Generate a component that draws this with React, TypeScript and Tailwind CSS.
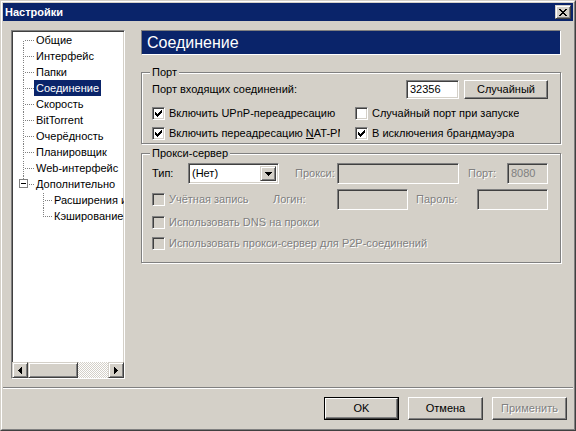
import type { ReactNode } from "react";

const sunken =
  "border border-t-[#808080] border-l-[#808080] border-b-white border-r-white shadow-[inset_1px_1px_#404040,inset_-1px_-1px_#d4d0c8]";
const raised =
  "border border-t-white border-l-white border-b-[#404040] border-r-[#404040] shadow-[inset_-1px_-1px_#808080]";
const raisedScroll =
  "border border-t-[#d4d0c8] border-l-[#d4d0c8] border-b-[#404040] border-r-[#404040] shadow-[inset_1px_1px_#fff,inset_-1px_-1px_#808080]";
const etched =
  "border border-[#808080] shadow-[inset_1px_1px_#fff,1px_1px_#fff]";
const disabledText = "text-[#808080] [text-shadow:1px_1px_0_#fff]";

const CheckMark = () => {
  const cols = [2, 3, 4, 3, 2, 1, 0];
  return (
    <svg width="7" height="7" viewBox="0 0 7 7" shapeRendering="crispEdges">
      {cols.map((y, x) => (
        <rect key={x} x={x} y={y} width="1" height="3" fill="#000" />
      ))}
    </svg>
  );
};

const Check = ({ checked, disabled }: { checked?: boolean; disabled?: boolean }) => (
  <span
    className={`w-[13px] h-[13px] shrink-0 flex items-center justify-center ${sunken} ${
      disabled ? "bg-[#d4d0c8]" : "bg-white"
    }`}
  >
    {checked && <CheckMark />}
  </span>
);

const CheckRow = ({
  label,
  checked,
  disabled,
  className = "",
}: {
  label: ReactNode;
  checked?: boolean;
  disabled?: boolean;
  className?: string;
}) => (
  <div className={`flex items-center h-[13px] overflow-hidden whitespace-nowrap ${className}`}>
    <Check checked={checked} disabled={disabled} />
    <span className={`ml-[4px] leading-[13px] ${disabled ? disabledText : ""}`}>{label}</span>
  </div>
);

const Field = ({ value, disabled, className = "" }: { value?: string; disabled?: boolean; className?: string }) => (
  <div
    className={`${sunken} h-[21px] flex items-center px-[3px] ${
      disabled ? "bg-[#d4d0c8] text-[#808080]" : "bg-white"
    } ${className}`}
  >
    {value}
  </div>
);

const Group = ({ title, children, className = "" }: { title: string; children: ReactNode; className?: string }) => (
  <div className={`${etched} pl-[10px] pr-[12px] ${className}`}>
    <div className="-mt-[7px] -ml-[2px] w-fit px-[2px] h-[13px] leading-[13px] bg-[#d4d0c8]">{title}</div>
    {children}
  </div>
);

// dotted tree lines, drawn pixel by pixel
const dotsV = (x: number, y0: number, y1: number, row: number) => {
  const out = [];
  for (let y = y0; y < y1; y++) if ((y + row) % 2 === 1) out.push(<rect key={`v${x}-${y}`} x={x} y={y} width="1" height="1" fill="#808080" />);
  return out;
};
const dotsH = (y: number, x0: number, x1: number) => {
  const out = [];
  for (let x = x0; x < x1; x++) if (x % 2 === 1) out.push(<rect key={`h${y}-${x}`} x={x} y={y} width="1" height="1" fill="#808080" />);
  return out;
};

type Item = { label: string; level: 0 | 1; kind: "first" | "mid" | "last" | "parent"; selected?: boolean };

const items: Item[] = [
  { label: "Общие", level: 0, kind: "first" },
  { label: "Интерфейс", level: 0, kind: "mid" },
  { label: "Папки", level: 0, kind: "mid" },
  { label: "Соединение", level: 0, kind: "mid", selected: true },
  { label: "Скорость", level: 0, kind: "mid" },
  { label: "BitTorrent", level: 0, kind: "mid" },
  { label: "Очерёдность", level: 0, kind: "mid" },
  { label: "Планировщик", level: 0, kind: "mid" },
  { label: "Web-интерфейс", level: 0, kind: "mid" },
  { label: "Дополнительно", level: 0, kind: "parent" },
  { label: "Расширения интерфейса", level: 1, kind: "mid" },
  { label: "Кэширование диска", level: 1, kind: "last" },
];

const TreeRow = ({ item, index }: { item: Item; index: number }) => {
  const w = item.level === 0 ? 22 : 40;
  const vx = item.level === 0 ? 11 : 31;
  const row = index % 2;
  let lines: ReactNode[] = [];
  if (item.level === 0) {
    if (item.kind === "first") lines = [...dotsV(vx, 8, 16, row), ...dotsH(8, 12, 22)];
    else if (item.kind === "mid") lines = [...dotsV(vx, 0, 16, row), ...dotsH(8, 12, 22)];
    else lines = [...dotsV(vx, 0, 4, row), ...dotsH(8, 16, 22)];
  } else {
    lines = [...dotsV(vx, 0, item.kind === "last" ? 9 : 16, row), ...dotsH(8, 32, 40)];
  }
  return (
    <div className="flex h-[16px] items-center whitespace-nowrap">
      <svg width={w} height="16" viewBox={`0 0 ${w} 16`} shapeRendering="crispEdges" className="shrink-0">
        {lines}
        {item.kind === "parent" && (
          <>
            <rect x="7.5" y="3.5" width="8" height="8" fill="#fff" stroke="#808080" />
            <rect x="9" y="7" width="5" height="1" fill="#000" />
          </>
        )}
      </svg>
      <span
        className={`px-[2px] h-[16px] leading-[16px] ${item.selected ? "bg-[#0a246a] text-white" : ""}`}
      >
        {item.label}
      </span>
    </div>
  );
};

const Arrow = ({ dir }: { dir: "left" | "right" | "down" }) => {
  if (dir === "down")
    return (
      <svg width="7" height="4" viewBox="0 0 7 4" shapeRendering="crispEdges">
        <path d="M0 0h7v1h-1v1h-1v1h-1v1h-1v-1h-1v-1h-1v-1h-1z" fill="#000" />
      </svg>
    );
  return (
    <svg width="4" height="7" viewBox="0 0 4 7" shapeRendering="crispEdges">
      {dir === "left" ? (
        <path d="M3 0h1v7h-1v-1h-1v-1h-1v-1h-1v-1h1v-1h1v-1h1z" fill="#000" />
      ) : (
        <path d="M0 0h1v1h1v1h1v1h1v1h-1v1h-1v1h-1v1h-1z" fill="#000" />
      )}
    </svg>
  );
};

const Tree = () => (
  <div className={`w-[114px] h-[349px] shrink-0 bg-white flex flex-col ${sunken}`}>
    <div className="flex-1 overflow-hidden pt-[1px]">
      {items.map((it, i) => (
        <TreeRow key={it.label} item={it} index={i} />
      ))}
    </div>
    <div className="h-[16px] flex shrink-0">
      <div className={`w-[16px] flex items-center justify-center bg-[#d4d0c8] ${raisedScroll}`}>
        <Arrow dir="left" />
      </div>
      <div className={`w-[50px] bg-[#d4d0c8] ${raisedScroll}`} />
      <div className="flex-1 bg-[repeating-conic-gradient(#fff_0_25%,#d4d0c8_0_50%)] bg-[length:2px_2px]" />
      <div className={`w-[16px] flex items-center justify-center bg-[#d4d0c8] ${raisedScroll}`}>
        <Arrow dir="right" />
      </div>
    </div>
  </div>
);

const Btn = ({ children, disabled, isDefault, className = "" }: { children: ReactNode; disabled?: boolean; isDefault?: boolean; className?: string }) => {
  const inner = (
    <div className={`flex-1 flex items-center justify-center ${raised} ${disabled ? disabledText : ""}`}>
      {children}
    </div>
  );
  if (isDefault) return <div className={`flex border border-black ${className}`}>{inner}</div>;
  return <div className={`flex ${className}`}>{inner}</div>;
};

export default function App() {
  return (
    <div className="w-[576px] h-[431px] bg-[#d4d0c8] text-black text-[11px] font-['Liberation_Sans',Arial,sans-serif] border border-t-[#d4d0c8] border-l-[#d4d0c8] border-b-[#404040] border-r-[#404040]">
      <div className="h-full border border-t-white border-l-white border-b-[#808080] border-r-[#808080] p-[1px] flex flex-col">
        {/* title bar */}
        <div className="h-[18px] shrink-0 bg-[#0a246a] flex items-center pl-[2px] pr-[2px]">
          <span className="text-white font-bold flex-1">Настройки</span>
          <div className={`w-[16px] h-[14px] flex items-center justify-center bg-[#d4d0c8] ${raisedScroll}`}>
            <svg width="8" height="7" viewBox="0 0 8 7" shapeRendering="crispEdges">
              <path d="M0 0h2l2 2.5L6 0h2L5 3.5 8 7H6L4 4.5 2 7H0l3-3.5z" fill="#000" />
            </svg>
          </div>
        </div>

        {/* body */}
        <div className="h-[366px] shrink-0 flex pt-[9px] pl-[8px]">
          <Tree />
          <div className="ml-[16px] w-[420px] flex flex-col">
            <div className="h-[25px] bg-[#0a246a] border border-t-[#808080] border-l-[#808080] border-b-white border-r-white flex items-center pl-[5px]">
              <span className="text-white text-[16px] leading-none">Соединение</span>
            </div>

            <Group title="Порт" className="mt-[17px] pb-[3px]">
              <div className="flex items-center h-[19px] mt-[1px]">
                <span className="flex-1">Порт входящих соединений:</span>
                <Field value="32356" className="w-[53px] !h-[19px]" />
                <Btn className="ml-[5px] w-[84px] h-[19px]">Случайный</Btn>
              </div>
              <div className="flex mt-[8px]">
                <CheckRow checked label="Включить UPnP-переадресацию" className="w-[188px]" />
                <CheckRow label="Случайный порт при запуске" className="ml-[15px]" />
              </div>
              <div className="flex mt-[7px]">
                <CheckRow
                  checked
                  label={
                    <>
                      Включить переадресацию <span className="underline">N</span>AT-PMP
                    </>
                  }
                  className="w-[188px]"
                />
                <CheckRow checked label="В исключения брандмауэра" className="ml-[15px]" />
              </div>
            </Group>

            <Group title="Прокси-сервер" className="mt-[9px] pb-[12px]">
              <div className="flex items-center h-[21px] mt-[3px]">
                <span className="w-[36px]">Тип:</span>
                <div className={`w-[91px] h-[21px] bg-white flex items-stretch p-[2px] ${sunken}`}>
                  <span className="flex-1 flex items-center pl-[1px]">(Нет)</span>
                  <div className={`w-[16px] flex items-center justify-center bg-[#d4d0c8] ${raisedScroll}`}>
                    <Arrow dir="down" />
                  </div>
                </div>
                <span className={`ml-[16px] w-[42px] ${disabledText}`}>Прокси:</span>
                <Field disabled className="w-[122px]" />
                <span className={`ml-[9px] w-[39px] ${disabledText}`}>Порт:</span>
                <Field disabled value="8080" className="w-[41px]" />
              </div>
              <div className="flex items-center h-[21px] mt-[5px]">
                <CheckRow disabled label="Учётная запись" className="w-[121px]" />
                <span className={`w-[64px] ${disabledText}`}>Логин:</span>
                <Field disabled className="w-[71px]" />
                <span className={`ml-[8px] w-[61px] ${disabledText}`}>Пароль:</span>
                <Field disabled className="w-[71px]" />
              </div>
              <CheckRow disabled label="Использовать DNS на прокси" className="mt-[6px]" />
              <CheckRow disabled label="Использовать прокси-сервер для P2P-соединений" className="mt-[8px]" />
            </Group>
          </div>
        </div>

        {/* separator */}
        <div className="h-[2px] shrink-0 border-t border-t-[#808080] border-b border-b-white" />

        {/* buttons */}
        <div className="flex justify-end gap-[9px] pt-[8px] pr-[6px]">
          <Btn isDefault className="w-[75px] h-[23px]">OK</Btn>
          <Btn className="w-[75px] h-[23px]">Отмена</Btn>
          <Btn disabled className="w-[75px] h-[23px]">Применить</Btn>
        </div>
      </div>
    </div>
  );
}
